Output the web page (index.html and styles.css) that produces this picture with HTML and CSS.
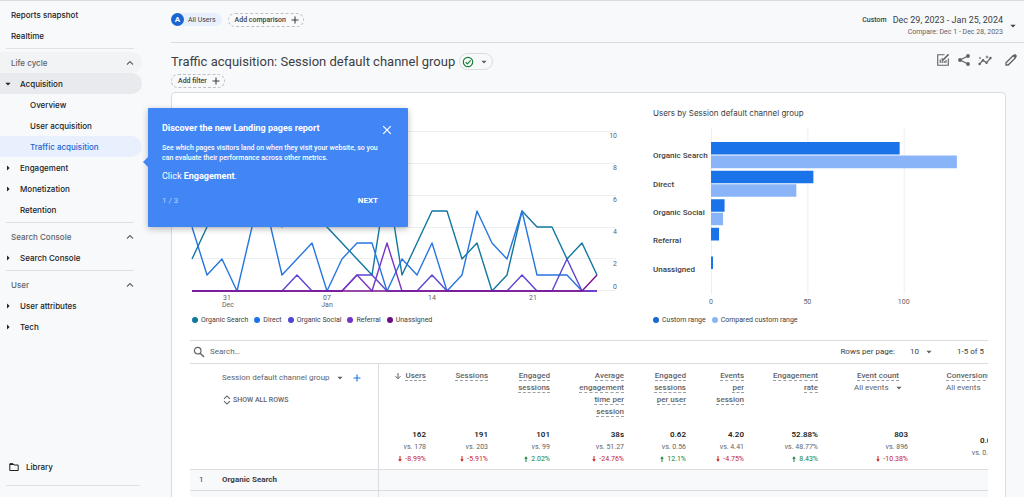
FILE: index.html
```html
<!DOCTYPE html>
<html lang="en">
<head>
<meta charset="utf-8">
<meta name="viewport" content="width=device-width, initial-scale=1">
<title>Traffic acquisition: Session default channel group</title>
<link rel="stylesheet" href="styles.css">
</head>
<body>
<svg class="sprite" aria-hidden="true">
  <symbol id="chevron-up" viewBox="0 0 10 10"><path d="M2 6.500 5 3.500 8 6.500" fill="none" stroke="currentColor" stroke-width="1.100"/></symbol>
  <symbol id="caret" viewBox="0 0 8 8"><path d="M1.400 2.800h5.200L4 5.500z" fill="currentColor"/></symbol>
  <symbol id="caret-right" viewBox="0 0 8 8"><path d="M3 1.600v4.800L5.600 4z" fill="currentColor"/></symbol>
  <symbol id="plus" viewBox="0 0 10 10"><path d="M5 1.500v7M1.500 5h7" fill="none" stroke="currentColor" stroke-width="1.100"/></symbol>
  <symbol id="down" viewBox="0 0 8 8"><path d="M4 1v5.500M1.500 4.200 4 6.700 6.500 4.200" fill="none" stroke="currentColor" stroke-width="1"/></symbol>
  <symbol id="delta-down" viewBox="0 0 6 8"><path d="M3 1v4" stroke="currentColor" stroke-width="1"/><path d="M1.200 4.300h3.600L3 6.800z" fill="currentColor"/></symbol>
  <symbol id="delta-up" viewBox="0 0 6 8"><path d="M3 7V3" stroke="currentColor" stroke-width="1"/><path d="M1.200 3.700h3.600L3 1.200z" fill="currentColor"/></symbol>
</svg>
<div class="app">
  <nav class="sidebar" aria-label="Reports">
    <a class="nav-item" href="#snapshot">Reports snapshot</a>
    <a class="nav-item" href="#realtime">Realtime</a>
    <hr class="rule">
    <button class="nav-group nav-group-hover" type="button">Life cycle<svg class="icon"><use href="#chevron-up"/></svg></button>
    <a class="nav-item nav-parent nav-open" href="#acquisition"><svg class="icon-small"><use href="#caret"/></svg>Acquisition</a>
    <a class="nav-item nav-child" href="#overview">Overview</a>
    <a class="nav-item nav-child" href="#user-acquisition">User acquisition</a>
    <a class="nav-item nav-child nav-current" href="#traffic" aria-current="page">Traffic acquisition</a>
    <a class="nav-item nav-parent" href="#engagement"><svg class="icon-small"><use href="#caret-right"/></svg>Engagement</a>
    <a class="nav-item nav-parent" href="#monetization"><svg class="icon-small"><use href="#caret-right"/></svg>Monetization</a>
    <a class="nav-item nav-parent" href="#retention"><span class="icon-small"></span>Retention</a>
    <hr class="rule">
    <button class="nav-group" type="button">Search Console<svg class="icon"><use href="#chevron-up"/></svg></button>
    <a class="nav-item nav-parent" href="#console"><svg class="icon-small"><use href="#caret-right"/></svg>Search Console</a>
    <hr class="rule">
    <button class="nav-group" type="button">User<svg class="icon"><use href="#chevron-up"/></svg></button>
    <a class="nav-item nav-parent" href="#attributes"><svg class="icon-small"><use href="#caret-right"/></svg>User attributes</a>
    <a class="nav-item nav-parent" href="#tech"><svg class="icon-small"><use href="#caret-right"/></svg>Tech</a>
    <a class="nav-item library" href="#library"><svg class="icon" viewBox="0 0 10 10"><path d="M.8 2v6.500h8.400V3H5L4 1.800H.8z" fill="none" stroke="currentColor" stroke-width="1"/><path d="M.8 1.500h3.400l1 1.500H.8z" fill="currentColor"/></svg>Library</a>
    <hr class="rule rule-end">
  </nav>

  <main class="main">
    <header class="topbar">
      <button class="segment" type="button"><span class="segment-badge">A</span>All Users</button>
      <button class="dashed" type="button">Add comparison<svg class="icon"><use href="#plus"/></svg></button>
      <button class="dates" type="button">
        <span class="dates-tag">Custom</span>
        <span class="dates-text"><span class="dates-range">Dec 29, 2023 - Jan 25, 2024</span><span class="dates-compare">Compare: Dec 1 - Dec 28, 2023</span></span>
        <svg class="icon-small"><use href="#caret"/></svg>
      </button>
    </header>

    <section class="heading">
      <h1 class="title">Traffic acquisition: Session default channel group</h1>
      <button class="status" type="button" aria-label="Data quality">
        <svg class="icon-check" viewBox="0 0 12 12"><circle cx="6" cy="6" r="4.700" fill="none" stroke="#188038" stroke-width="1.200"/><path d="M3.600 6.100 5.300 7.800 8.700 4.300" fill="none" stroke="#188038" stroke-width="1.200"/></svg>
        <svg class="icon-small"><use href="#caret"/></svg>
      </button>
      <div class="tools">
        <button class="tool" type="button" aria-label="Customize report"><svg viewBox="0 0 14 14"><path d="M8.500 1.700H1.700v10.600h10.600V5.500M4.200 10V6.500M6.200 10V5M8.200 10V8M10 10V7" fill="none" stroke="currentColor" stroke-width="1.100"/><path d="M6.500 7.500 12.600 1.400" stroke="currentColor" stroke-width="1.500"/></svg></button>
        <button class="tool" type="button" aria-label="Share"><svg viewBox="0 0 14 14"><path d="M11 3 3 7l8 4" fill="none" stroke="currentColor" stroke-width="1.200"/><g fill="currentColor"><circle cx="11" cy="3" r="1.900"/><circle cx="3" cy="7" r="1.900"/><circle cx="11" cy="11" r="1.900"/></g></svg></button>
        <button class="tool" type="button" aria-label="Insights"><svg viewBox="0 0 14 14"><path d="M1.500 11 5 7.300 8.500 9.800 12.500 5" fill="none" stroke="currentColor" stroke-width="1.200"/><g fill="currentColor"><circle cx="1.600" cy="11" r="1.200"/><circle cx="5" cy="7.300" r="1.200"/><circle cx="8.500" cy="9.800" r="1.200"/><circle cx="12.500" cy="5" r="1.200"/><path d="M9 2l.5 1.500L11 4l-1.500.5L9 6l-.5-1.500L7 4l1.500-.5zM2 3.500l.4 1 1 .5-1 .4L2 6.500l-.4-1.100-1-.4 1-.5z"/></g></svg></button>
        <button class="tool tool-edit" type="button" aria-label="Edit"><svg viewBox="0 0 14 14"><path d="M2 12V9.800L9.300 2.500l2.200 2.200L4.200 12z" fill="none" stroke="currentColor" stroke-width="1.300"/><path d="M9 2.800 10.500 1.300Q11 .9 11.500 1.300l1.200 1.200q.4.500 0 1L11.200 5z" fill="currentColor"/></svg></button>
      </div>
    </section>
    <div class="filters"><button class="dashed" type="button">Add filter<svg class="icon"><use href="#plus"/></svg></button></div>

    <section class="card">
      <div class="charts">
        <figure class="trend">
          <svg class="plot" viewBox="0 0 430 190" role="img" aria-label="Users over time">
            <g class="grid"><path d="M2.500 11.500H426M2.500 43.500H426M2.500 75.500H426M2.500 107.500H426M2.500 138.500H426M2.500 170.500H426"/></g>
            <g class="tick tick-end"><text x="427" y="18">10</text><text x="427" y="50">8</text><text x="427" y="82">6</text><text x="427" y="114">4</text><text x="427" y="146">2</text><text x="427" y="169">0</text></g>
            <g class="line">
              <path class="c1" d="M2 139 17 107 32 75 47 91 62 59 77 75 92 107 107 75 122 91 137 107 152 123 167 139 182 155 197 59 212 155 227 123 242 91 257 91 272 139 287 123 302 171 317 155 332 91 347 107 362 107 377 139 392 123 407 155"/>
              <path class="c2" d="M2 107 17 155 32 139 47 171 62 107 77 91 92 155 107 139 122 123 137 171 152 139 167 123 182 123 197 171 212 139 227 155 242 123 257 171 272 155 287 91 302 123 317 139 332 91 347 155 362 155 377 155 392 171 407 171"/>
              <path class="c3" d="M2 171H92L107 155 122 171H152L167 155H182L197 171H227L242 155 257 171H317L332 155 347 171H362L377 139 392 171H407"/>
              <path class="c4" d="M2 171H152L167 155 182 171 197 123 212 171H407"/>
              <path class="c5" d="M2 171H392L407 155"/>
            </g>
            <g class="tick tick-mid"><text x="37" y="180">31</text><text x="38" y="187">Dec</text><text x="137" y="180">07</text><text x="137" y="187">Jan</text><text x="242" y="180">14</text><text x="343" y="180">21</text></g>
          </svg>
          <figcaption class="legend"><span class="key k1">Organic Search</span><span class="key k2">Direct</span><span class="key k3">Organic Social</span><span class="key k4">Referral</span><span class="key k5">Unassigned</span></figcaption>
        </figure>
        <figure class="bars">
          <h2 class="bars-title">Users by Session default channel group</h2>
          <div class="bars-body">
            <div class="bars-labels"><span>Organic Search</span><span>Direct</span><span>Organic Social</span><span>Referral</span><span>Unassigned</span></div>
            <svg class="bars-plot" viewBox="0 0 281 180" role="img" aria-label="Users by channel">
              <g class="grid"><path d="M5.500 0V166M101.500 0V166M197.500 0V166"/></g>
              <g class="now"><path d="M5 14h188v12.500H5zM5 42.500h102V55H5zM5 71h13.500v12.500H5zM5 99.500h8V112H5zM5 128h2v12.500H5z"/></g>
              <g class="before"><path d="M5 27.500h245V40H5zM5 56h85v12.500H5zM5 84.500h12V97H5z"/></g>
              <g class="tick tick-mid"><text x="5" y="175">0</text><text x="101" y="175">50</text><text x="197" y="175">100</text></g>
            </svg>
          </div>
          <figcaption class="legend"><span class="key k6">Custom range</span><span class="key k7">Compared custom range</span></figcaption>
        </figure>
      </div>

      <div class="search-row">
        <label class="search"><svg class="icon-search" viewBox="0 0 12 12"><circle cx="4.700" cy="4.700" r="3.300" fill="none" stroke="currentColor" stroke-width="1.200"/><path d="M7.200 7.200 11 11" stroke="currentColor" stroke-width="1.400"/></svg><input class="search-input" type="text" placeholder="Search…" aria-label="Search"></label>
        <label class="pager">Rows per page:<span class="select"><select class="rows-select"><option>10</option></select><svg class="icon-small"><use href="#caret"/></svg></span></label>
        <span class="count">1-5 of 5</span>
      </div>
      <div class="table-clip">
        <table class="table">
          <colgroup><col class="w-dim"><col class="w-56"><col class="w-62"><col class="w-62"><col class="w-74"><col class="w-62"><col class="w-58"><col class="w-74"><col class="w-90"><col class="w-92"></colgroup>
          <thead>
            <tr class="head">
              <th class="dim" rowspan="2" scope="col">
                <div class="dim-pick"><span class="select"><select class="dim-select" aria-label="Dimension"><option>Session default channel group</option></select><svg class="icon-small"><use href="#caret"/></svg></span><button class="add" type="button" aria-label="Add dimension"><svg class="icon"><use href="#plus"/></svg></button></div>
                <button class="show-all" type="button"><svg class="icon" viewBox="0 0 10 10"><path d="M2 3.800 5 .9 8 3.800M2 6.200 5 9.100 8 6.200" fill="none" stroke="currentColor" stroke-width="1.100"/></svg>SHOW ALL ROWS</button>
              </th>
              <th scope="col"><svg class="icon-sort"><use href="#down"/></svg><span class="term">Users</span></th>
              <th scope="col"><span class="term">Sessions</span></th>
              <th scope="col"><span class="term">Engaged<br>sessions</span></th>
              <th scope="col"><span class="term">Average<br>engagement<br>time per<br>session</span></th>
              <th scope="col"><span class="term">Engaged<br>sessions<br>per user</span></th>
              <th scope="col"><span class="term">Events<br>per<br>session</span></th>
              <th scope="col"><span class="term">Engagement<br>rate</span></th>
              <th class="with-pick" scope="col"><span class="term">Event count</span><span class="select"><select class="event-select" aria-label="Event count filter"><option>All events</option></select><svg class="icon-small"><use href="#caret"/></svg></span></th>
              <th class="with-pick" scope="col"><span class="term">Conversions</span><span class="select"><select class="event-select" aria-label="Conversions filter"><option>All events</option></select><svg class="icon-small"><use href="#caret"/></svg></span></th>
            </tr>
            <tr class="totals">
              <td><b>162</b><span>vs. 178</span><em class="bad"><svg><use href="#delta-down"/></svg>-8.99%</em></td>
              <td><b>191</b><span>vs. 203</span><em class="bad"><svg><use href="#delta-down"/></svg>-5.91%</em></td>
              <td><b>101</b><span>vs. 99</span><em class="good"><svg><use href="#delta-up"/></svg>2.02%</em></td>
              <td><b>38s</b><span>vs. 51.27</span><em class="bad"><svg><use href="#delta-down"/></svg>-24.76%</em></td>
              <td><b>0.62</b><span>vs. 0.56</span><em class="good"><svg><use href="#delta-up"/></svg>12.1%</em></td>
              <td><b>4.20</b><span>vs. 4.41</span><em class="bad"><svg><use href="#delta-down"/></svg>-4.75%</em></td>
              <td><b>52.88%</b><span>vs. 48.77%</span><em class="good"><svg><use href="#delta-up"/></svg>8.43%</em></td>
              <td><b>803</b><span>vs. 896</span><em class="bad"><svg><use href="#delta-down"/></svg>-10.38%</em></td>
              <td><b>0.00</b><span>vs. 0.00</span></td>
            </tr>
          </thead>
          <tbody>
            <tr class="row"><th scope="row"><span class="row-index">1</span>Organic Search</th><td></td><td></td><td></td><td></td><td></td><td></td><td></td><td></td><td></td></tr>
            <tr class="row"><th scope="row"></th><td></td><td></td><td></td><td></td><td></td><td></td><td></td><td></td><td></td></tr>
          </tbody>
        </table>
      </div>
    </section>
  </main>

  <aside class="tour" role="dialog" aria-labelledby="tour-title">
    <div class="tour-head"><h2 class="tour-title" id="tour-title">Discover the new Landing pages report</h2>
    <button class="tour-close" type="button" aria-label="Close"><svg viewBox="0 0 10 10"><path d="M1.200 1.200l7.600 7.600M8.800 1.200 1.200 8.800" fill="none" stroke="currentColor" stroke-width="1.200"/></svg></button></div>
    <p class="tour-text">See which pages visitors land on when they visit your website, so you<br>can evaluate their performance across other metrics.</p>
    <p class="tour-action">Click <strong>Engagement</strong>.</p>
    <div class="tour-foot"><span class="tour-step">1 / 3</span><button class="tour-next" type="button">NEXT</button></div>
  </aside>
</div>
</body>
</html>
```
FILE: styles.css
```css
* { box-sizing: border-box; }

body {
  margin: 0;
  background: #f8f9fb;
  color: #3c4043;
  font: 8px/12px Roboto, "Liberation Sans", sans-serif;
}

button, input, select {
  margin: 0;
  padding: 0;
  border: 0;
  background: none;
  color: inherit;
  font: inherit;
}

select { appearance: none; }
a { color: inherit; text-decoration: none; }
h1, h2, p, figure { margin: 0; }
svg { flex: none; }

.sprite { position: absolute; width: 0; height: 0; }
.icon { width: 10px; height: 10px; }
.icon-small { width: 8px; height: 8px; flex: none; }

.app {
  position: relative;
  display: flex;
  height: 100vh;
  overflow: hidden;
  border-top: 1px solid #dadce0;
}

/* Sidebar */
.sidebar {
  display: flex;
  flex-direction: column;
  flex: none;
  width: 142px;
  padding: 3px 0 11px;
  font-family: Inter, sans-serif;
  font-weight: 500;
}

.nav-item, .nav-group {
  display: flex;
  align-items: center;
  flex: none;
  height: 21px;
  padding-left: 11px;
  border-radius: 0 11px 11px 0;
}

.nav-item { color: #202124; }
.nav-group { justify-content: space-between; padding-right: 7px; color: #5f6368; text-align: left; }
.nav-group-hover { background: #f1f3f4; }
.nav-parent { gap: 8px; padding-left: 4px; }
.nav-open { background: #e8eaed; }
.nav-child { padding-left: 30px; }
.nav-current { background: #e8f0fe; color: #1967d2; }
.rule { flex: none; width: 128px; height: 1px; margin: 2px 0 3px 6px; border: 0; background: #dfe1e5; }
.library { gap: 7px; margin-top: auto; padding-left: 9px; }
.rule-end { width: 134px; margin: 8px 0 0 6px; }

/* Top bar */
.main { flex: 1; min-width: 0; padding-left: 29px; }

.topbar {
  display: flex;
  align-items: center;
  gap: 6px;
  height: 42px;
  padding: 0 7px 4px 0;
  border-bottom: 1px solid #dadce0;
}

.segment {
  display: flex;
  align-items: center;
  gap: 4px;
  height: 13px;
  padding-right: 6px;
  border-radius: 7px;
  background: #e8f0fe;
  font-size: 7px;
}

.segment-badge {
  width: 13px;
  height: 13px;
  border-radius: 50%;
  background: #1967d2;
  color: #fff;
  font-size: 8px;
  font-weight: 700;
  line-height: 13px;
}

.dashed {
  display: flex;
  align-items: center;
  gap: 4px;
  height: 14px;
  padding: 0 3px 0 6px;
  border: 1px dashed #bdc1c6;
  border-radius: 7px;
  font-size: 7px;
  font-weight: 500;
}

.dates { display: flex; align-items: center; gap: 6px; margin-left: auto; padding-top: 13px; }
.dates-tag { align-self: flex-start; font-size: 7px; font-weight: 500; }
.dates-text { display: flex; flex-direction: column; align-items: flex-end; }
.dates-range { font-size: 9px; }
.dates-compare { color: #5f6368; font-size: 7px; }

/* Heading */
.heading { display: flex; align-items: center; gap: 4px; padding: 10px 6px 0 0; }
.title { font-size: 13px; font-weight: 400; line-height: 17px; }

.status {
  display: flex;
  align-items: center;
  gap: 6px;
  height: 17px;
  padding: 0 4px 0 2px;
  border: 1px solid #dadce0;
  border-radius: 9px;
  color: #5f6368;
}

.icon-check { width: 12px; height: 12px; }
.tools { display: flex; gap: 7px; margin-left: auto; padding-bottom: 3px; color: #5f6368; }
.tool { width: 14px; height: 14px; }
.tool svg { display: block; }
.tool-edit { margin-left: 5px; }
.filters { display: flex; padding: 4px 0; }

/* Card */
.card {
  margin-right: 18px;
  padding: 0 17px 0 18px;
  border: 1px solid #dadce0;
  border-radius: 4px;
  background: #fff;
}

.charts {
  display: grid;
  grid-template-columns: 430fr 335fr;
  column-gap: 33px;
  height: 247px;
}

.trend { padding-top: 27px; }
.plot, .bars-plot { display: block; width: 100%; height: auto; }
.grid { fill: none; stroke: #eceef0; }
.line { fill: none; stroke-width: 1.4; stroke-linejoin: round; }
.c1 { stroke: #12779f; }
.c2 { stroke: #2776e0; }
.c3 { stroke: #5a45d4; }
.c4 { stroke: #7934c4; }
.c5 { stroke: #7b1290; }
.tick { fill: #5f6368; font-size: 7px; }
.tick-end { text-anchor: end; }
.tick-mid { text-anchor: middle; }

.legend { display: flex; gap: 6px; font-size: 7px; }
.trend .legend { padding: 4px 0 0 2px; }
.key { display: flex; align-items: center; gap: 3px; }
.key::before { content: ""; width: 6px; height: 6px; border-radius: 50%; background: currentColor; }
.k1::before { background: #12779f; }
.k2::before { background: #1a73e8; }
.k3::before { background: #4f46d8; }
.k4::before { background: #6f35c5; }
.k5::before { background: #6a0f80; }
.k6::before { background: #1a67d2; }
.k7::before { background: #8ab4f8; }

.bars { padding-top: 14px; }
.bars-title { font: 400 8px/12px Inter, sans-serif; }
.bars-body { display: grid; grid-template-columns: 53px 1fr; align-items: start; padding-top: 9px; }

.bars-labels {
  display: grid;
  grid-auto-rows: 1fr;
  align-items: center;
  height: 156px;
  padding-top: 14px;
  font-weight: 500;
  white-space: nowrap;
}

.now { fill: #1a73e8; }
.before { fill: #8ab4f8; }
.bars .legend { padding-top: 5px; }

/* Table */
.search-row {
  display: flex;
  align-items: center;
  height: 24px;
  padding-right: 4px;
  border-top: 1px solid #dadce0;
  border-bottom: 1px solid #dadce0;
}

.search { display: flex; align-items: center; gap: 5px; flex: 1; padding-left: 3px; color: #5f6368; }
.icon-search { width: 12px; height: 12px; }
.search-input { flex: 1; outline: 0; }
.search-input::placeholder { color: #5f6368; opacity: 1; }
.pager { display: flex; align-items: center; gap: 15px; }
.select { display: inline-flex; align-items: center; gap: 6px; }
.select svg { color: #5f6368; }
.count { padding-left: 24px; }

.table-clip { overflow: hidden; }
.table { width: 100%; min-width: 818px; border-collapse: collapse; table-layout: fixed; }
.w-dim { width: 188px; }
.w-56 { width: 56px; }
.w-58 { width: 58px; }
.w-62 { width: 62px; }
.w-74 { width: 74px; }
.w-90 { width: 90px; }
.w-92 { width: 92px; }

.table th, .table td { padding: 0 8px 0 0; text-align: right; font-weight: 400; }
.table .head th { padding-top: 6px; vertical-align: top; font-weight: 500; color: #5f6368; }
.head { height: 62px; }
.term { border-bottom: 1px dashed #9aa0a6; }
.icon-sort { width: 8px; height: 8px; margin-right: 3px; vertical-align: middle; }
.table .with-pick { padding-right: 17px; }
.with-pick .select { display: flex; justify-content: flex-end; margin-right: -4px; font-weight: 400; }

.table .dim, .table th[scope="row"] { border-right: 1px solid #dadce0; text-align: left; }
.table .head .dim { padding-left: 32px; font-weight: 400; }
.dim-pick { display: flex; align-items: center; gap: 8px; padding-top: 2px; }
.add { width: 10px; height: 10px; color: #1a73e8; }
.add svg { display: block; }
.show-all { display: flex; align-items: center; gap: 1px; margin-top: 10px; font-size: 7px; font-weight: 500; }

.totals { height: 43px; }
.table .totals td:last-child { padding-right: 12px; }
.totals b, .totals span, .totals em { display: block; font-style: normal; }
.totals b { color: #202124; font-weight: 600; }
.totals span { color: #5f6368; font-size: 7px; }
.totals em { font-size: 7px; }
.totals em svg { width: 6px; height: 8px; margin-right: 2px; vertical-align: -2px; }
.bad { color: #c5221f; }
.good { color: #188038; }

.row { height: 21px; border-top: 1px solid #dadce0; background: #f8f9fa; }
.table .row th { font-weight: 700; }
.row-index { display: inline-block; width: 32px; padding-left: 9px; font-weight: 400; }

/* Tour callout */
.tour {
  position: absolute;
  top: 107px;
  left: 148px;
  width: 260px;
  padding: 13px 14px 20px;
  border-radius: 1px;
  background: #4285f4;
  box-shadow: 0 2px 6px rgba(60, 64, 67, .35);
  color: #fff;
}

.tour::before {
  content: "";
  position: absolute;
  top: 49px;
  left: -5px;
  border: solid transparent;
  border-width: 5px 5px 5px 0;
  border-right-color: #4285f4;
}

.tour-head { display: flex; justify-content: space-between; }
.tour-title { font-size: 9px; font-weight: 700; line-height: 14px; }
.tour-close { width: 10px; height: 10px; margin: 4px 2px 0 0; }
.tour-close svg { display: block; }
.tour-text { padding-top: 8px; font-size: 7px; font-weight: 500; line-height: 10px; }
.tour-action { padding-top: 6px; font-size: 9px; line-height: 14px; }
.tour-foot { display: flex; justify-content: space-between; padding: 12px 16px 0 0; }
.tour-step { opacity: .6; }
.tour-next { font-weight: 700; }
```
